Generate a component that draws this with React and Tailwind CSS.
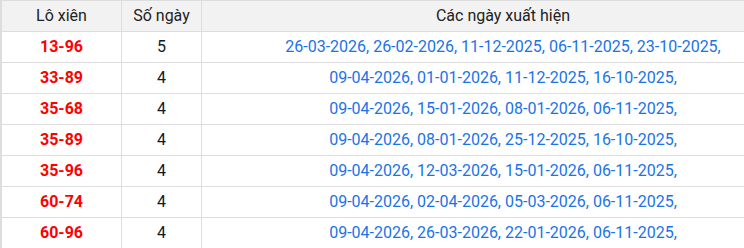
import React from "react";

const rows = [
  ["13-96", "5", "26-03-2026, 26-02-2026, 11-12-2025, 06-11-2025, 23-10-2025,"],
  ["33-89", "4", "09-04-2026, 01-01-2026, 11-12-2025, 16-10-2025,"],
  ["35-68", "4", "09-04-2026, 15-01-2026, 08-01-2026, 06-11-2025,"],
  ["35-89", "4", "09-04-2026, 08-01-2026, 25-12-2025, 16-10-2025,"],
  ["35-96", "4", "09-04-2026, 12-03-2026, 15-01-2026, 06-11-2025,"],
  ["60-74", "4", "09-04-2026, 02-04-2026, 05-03-2026, 06-11-2025,"],
  ["60-96", "4", "09-04-2026, 26-03-2026, 22-01-2026, 06-11-2025,"],
];

export default function App() {
  return (
    <div className="w-[744px] h-[248px] overflow-hidden bg-white" style={{ fontFamily: "Roboto, 'Liberation Sans', sans-serif" }}>
      <div className="w-[804px] border-l-2 border-t border-[#dddddd]">
        <div className="flex h-[31px] bg-[#f2f2f2] border-b border-[#dddddd] text-[16px] text-[#222222]">
          <div className="w-[120px] flex items-center justify-center border-r border-[#dddddd]">Lô xiên</div>
          <div className="w-[80px] flex items-center justify-center border-r border-[#dddddd]">Số ngày</div>
          <div className="flex-1 flex items-center justify-center">Các ngày xuất hiện</div>
        </div>
        {rows.map((r) => (
          <div key={r[0]} className="flex h-[31px] border-b border-[#dddddd] text-[16px]">
            <div className="w-[120px] flex items-center justify-center border-r border-[#dddddd] font-bold text-[#ff0000]">{r[0]}</div>
            <div className="w-[80px] flex items-center justify-center border-r border-[#dddddd] text-[#111827]">{r[1]}</div>
            <div className="flex-1 flex items-center justify-center text-[#1a73e8]">{r[2]}</div>
          </div>
        ))}
      </div>
    </div>
  );
}
